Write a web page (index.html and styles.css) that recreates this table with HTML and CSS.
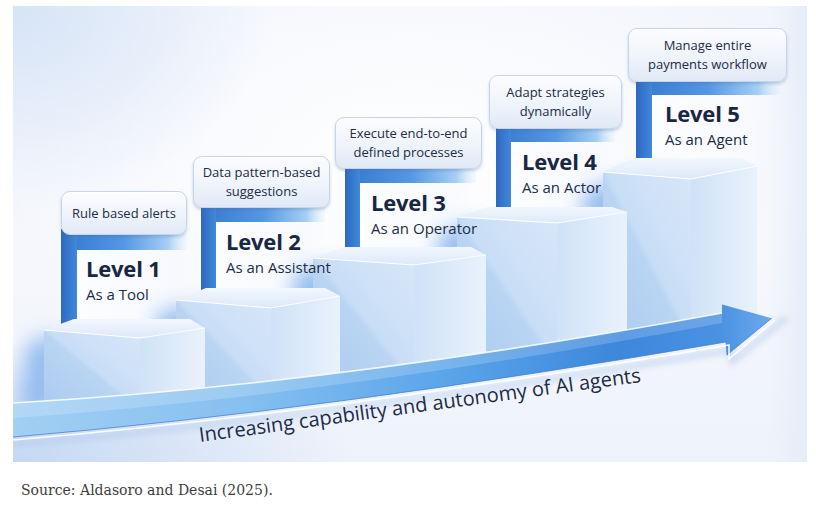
FILE: index.html
```html
<!DOCTYPE html>
<html lang="en">
<head>
<meta charset="utf-8">
<title>Levels of AI agents</title>
<link rel="stylesheet" href="styles.css">
</head>
<body>
<figure class="fig">
  <div class="canvas">
    <svg class="art" viewBox="13 6 794 456" width="794" height="456" aria-hidden="true">
      <defs>
        <linearGradient id="bar" x1="0" y1="0" x2="1" y2="0">
          <stop offset="0" stop-color="#2c69c0"/>
          <stop offset="1" stop-color="#4388da"/>
        </linearGradient>
        <linearGradient id="band" x1="0" y1="0" x2="1" y2="0">
          <stop offset="0" stop-color="#3378cf"/>
          <stop offset="0.5" stop-color="#5597e2"/>
          <stop offset="0.85" stop-color="#a6cff4"/>
          <stop offset="1" stop-color="#d6e9fb" stop-opacity="0.2"/>
        </linearGradient>
        <linearGradient id="panel" x1="0" y1="0" x2="1" y2="0">
          <stop offset="0" stop-color="#fcfdff"/>
          <stop offset="0.75" stop-color="#f8fafe"/>
          <stop offset="1" stop-color="#f4f7fd" stop-opacity="0"/>
        </linearGradient>
        <linearGradient id="front" x1="0" y1="1" x2="1" y2="0">
          <stop offset="0" stop-color="#a9caf0"/>
          <stop offset="0.48" stop-color="#bad5f3"/>
          <stop offset="0.52" stop-color="#c8def6"/>
          <stop offset="1" stop-color="#d8e7f9"/>
        </linearGradient>
        <linearGradient id="side" x1="0" y1="0" x2="1" y2="0">
          <stop offset="0" stop-color="#cfe2f7"/>
          <stop offset="1" stop-color="#e9f2fc"/>
        </linearGradient>
        <linearGradient id="top" x1="0" y1="0" x2="0" y2="1">
          <stop offset="0" stop-color="#f2f7fe"/>
          <stop offset="1" stop-color="#dce9f9"/>
        </linearGradient>
        <linearGradient id="shaft" gradientUnits="userSpaceOnUse" x1="13" y1="0" x2="772" y2="0">
          <stop offset="0" stop-color="#a2cff3"/>
          <stop offset="0.3" stop-color="#86c0f0"/>
          <stop offset="0.55" stop-color="#5ea7ea"/>
          <stop offset="0.8" stop-color="#3d87dc"/>
          <stop offset="0.93" stop-color="#4a91e2"/>
          <stop offset="1" stop-color="#6caaec"/>
        </linearGradient>
        <filter id="blur" x="-50%" y="-50%" width="200%" height="200%">
          <feGaussianBlur stdDeviation="10"/>
        </filter>
        <filter id="soft" x="-50%" y="-50%" width="200%" height="200%">
          <feGaussianBlur stdDeviation="3"/>
        </filter>
      </defs>

      <!-- brackets -->
      <g class="bracket">
        <rect x="61" y="229" width="126" height="21" fill="url(#band)"/>
        <rect x="77" y="250" width="110" height="80" fill="url(#panel)"/>
        <rect x="61" y="229" width="16" height="101" fill="url(#bar)"/>
      </g>
      <g class="bracket">
        <rect x="201" y="202" width="124" height="20" fill="url(#band)"/>
        <rect x="216" y="222" width="109" height="76" fill="url(#panel)"/>
        <rect x="201" y="202" width="15" height="96" fill="url(#bar)"/>
      </g>
      <g class="bracket">
        <rect x="345" y="163" width="131" height="20" fill="url(#band)"/>
        <rect x="360" y="183" width="116" height="76" fill="url(#panel)"/>
        <rect x="345" y="163" width="15" height="96" fill="url(#bar)"/>
      </g>
      <g class="bracket">
        <rect x="496" y="123" width="119" height="19" fill="url(#band)"/>
        <rect x="511" y="142" width="104" height="78" fill="url(#panel)"/>
        <rect x="496" y="123" width="15" height="97" fill="url(#bar)"/>
      </g>
      <g class="bracket">
        <rect x="636" y="76" width="144" height="19" fill="url(#band)"/>
        <rect x="652" y="95" width="128" height="76" fill="url(#panel)"/>
        <rect x="636" y="76" width="16" height="95" fill="url(#bar)"/>
      </g>

      <!-- glows behind boxes -->
      <g filter="url(#blur)" fill="#8db8ee" opacity="0.9">
        <polygon points="585,190 628,178 628,330 568,345"/>
        <polygon points="440,232 482,222 482,360 424,372"/>
        <polygon points="295,272 335,264 335,378 280,388"/>
        <polygon points="158,312 195,305 195,392 143,400"/>
        <polygon points="28,342 60,334 60,410 18,414"/>
      </g>

      <!-- boxes, back to front -->
      <g class="box">
        <polygon points="603,172 691,179 691,326 603,342" fill="url(#front)"/>
        <polygon points="691,179 757,166 757,322 691,326" fill="url(#side)"/>
        <polygon points="603,172 633,158 742,158 757,166 691,179" fill="url(#top)"/>
        <polyline points="603,172 691,179 757,166" fill="none" stroke="#ffffff" stroke-width="1.2" opacity="0.9"/>
      </g>
      <g class="box">
        <polygon points="457,217 557,223 557,349 457,365" fill="url(#front)"/>
        <polygon points="557,223 627,212 627,337 557,349" fill="url(#side)"/>
        <polygon points="457,217 487,207 612,207 627,212 557,223" fill="url(#top)"/>
        <polyline points="457,217 557,223 627,212" fill="none" stroke="#ffffff" stroke-width="1.2" opacity="0.9"/>
      </g>
      <g class="box">
        <polygon points="313,258 414,265 414,371 313,384" fill="url(#front)"/>
        <polygon points="414,265 486,255 486,360 414,371" fill="url(#side)"/>
        <polygon points="313,258 343,247 471,247 486,255 414,265" fill="url(#top)"/>
        <polyline points="313,258 414,265 486,255" fill="none" stroke="#ffffff" stroke-width="1.2" opacity="0.9"/>
      </g>
      <g class="box">
        <polygon points="176,300 271,308 271,389 176,399" fill="url(#front)"/>
        <polygon points="271,308 340,296 340,381 271,389" fill="url(#side)"/>
        <polygon points="176,300 206,288 325,288 340,296 271,308" fill="url(#top)"/>
        <polyline points="176,300 271,308 340,296" fill="none" stroke="#ffffff" stroke-width="1.2" opacity="0.9"/>
      </g>
      <g class="box">
        <polygon points="44,330 140,338 140,402 44,409" fill="url(#front)"/>
        <polygon points="140,338 205,328 205,396 140,402" fill="url(#side)"/>
        <polygon points="44,330 74,319 190,319 205,328 140,338" fill="url(#top)"/>
        <polyline points="44,330 140,338 205,328" fill="none" stroke="#ffffff" stroke-width="1.2" opacity="0.9"/>
      </g>

      <!-- arrow -->
      <path d="M13,444 Q330,418 730,350 L732,362 L786,318" fill="none" stroke="#a9c4ea" stroke-width="6" opacity="0.5" filter="url(#soft)"/>
      <path d="M13,403 Q330,385 722,313 L722,304 L772,318 L727,355 L726,342 Q330,410 13,437 Z" fill="url(#shaft)"/>
      <path d="M13,403 Q330,385 722,313 L722,323 Q330,396 13,418 Z" fill="#ffffff" opacity="0.18"/>
      <path d="M13,403 Q330,385 722,313" fill="none" stroke="#ffffff" stroke-width="1.6" opacity="0.85"/>
      <path d="M722,304 L772,318" fill="none" stroke="#ffffff" stroke-width="1" opacity="0.6"/>
      <path d="M13,437 Q330,410 726,342 L727,355 L772,318" fill="none" stroke="#3f7bc9" stroke-width="1" opacity="0.7"/>
      <path d="M13,440 Q330,413 729,345 L729,359 L775,320" fill="none" stroke="#ffffff" stroke-width="1.6" opacity="0.9"/>
    </svg>

    <div class="bubble b1">Rule based alerts</div>
    <div class="bubble b2">Data pattern-based<br>suggestions</div>
    <div class="bubble b3">Execute end-to-end<br>defined processes</div>
    <div class="bubble b4">Adapt strategies<br>dynamically</div>
    <div class="bubble b5">Manage entire<br>payments workflow</div>

    <div class="tag t1"><div class="title">Level 1</div><div class="sub">As a Tool</div></div>
    <div class="tag t2"><div class="title">Level 2</div><div class="sub">As an Assistant</div></div>
    <div class="tag t3"><div class="title">Level 3</div><div class="sub">As an Operator</div></div>
    <div class="tag t4"><div class="title">Level 4</div><div class="sub">As an Actor</div></div>
    <div class="tag t5"><div class="title">Level 5</div><div class="sub">As an Agent</div></div>

    <div class="axis-label">Increasing capability and autonomy of AI agents</div>
  </div>
  <figcaption class="source">Source: Aldasoro and Desai (2025).</figcaption>
</figure>
</body>
</html>
```

FILE: styles.css
```css
html, body {
  margin: 0;
  padding: 0;
  background: #ffffff;
}

.fig {
  margin: 6px 0 0 13px;
  padding: 0;
  width: 794px;
}

.canvas {
  position: relative;
  width: 794px;
  height: 456px;
  overflow: hidden;
  background:
    radial-gradient(ellipse 260px 200px at 0% 0%, #d6e4f7 0%, rgba(214, 228, 247, 0) 100%),
    radial-gradient(ellipse 340px 120px at 0% 100%, #c4d8f3 0%, rgba(196, 216, 243, 0) 100%),
    radial-gradient(ellipse 420px 260px at 50% 35%, #ffffff 0%, rgba(255, 255, 255, 0) 100%),
    linear-gradient(to left, #e6edf9 0px, rgba(230, 237, 249, 0) 40px),
    linear-gradient(180deg, #f2f5fc 0%, #f5f7fc 60%, #eef2fb 100%);
}

.art {
  position: absolute;
  left: 0;
  top: 0;
  display: block;
}

.bubble {
  position: absolute;
  box-sizing: border-box;
  display: flex;
  align-items: center;
  justify-content: center;
  text-align: center;
  font-family: "Open Sans", "Noto Sans", sans-serif;
  font-size: 13px;
  line-height: 19px;
  color: #222c45;
  background: linear-gradient(180deg, #fbfcff 0%, #eff4fb 55%, #e0e9f6 100%);
  border: 1px solid #c6d5eb;
  border-radius: 9px;
  box-shadow: 0 2px 3px rgba(70, 110, 170, 0.28), inset 0 1px 0 #ffffff;
}

.b1 { left: 48px;  top: 185px; width: 126px; height: 44px; }
.b2 { left: 180px; top: 150px; width: 137px; height: 52px; }
.b3 { left: 322px; top: 111px; width: 147px; height: 52px; }
.b4 { left: 476px; top: 69px;  width: 133px; height: 54px; }
.b5 { left: 615px; top: 22px;  width: 159px; height: 54px; }

.tag {
  position: absolute;
  font-family: "Open Sans", "Noto Sans", sans-serif;
  white-space: nowrap;
}

.tag .title {
  font-size: 22px;
  line-height: 24px;
  font-weight: 700;
  color: #1a2742;
  letter-spacing: -0.2px;
}

.tag .sub {
  margin-top: 2px;
  font-size: 15px;
  line-height: 24px;
  color: #222c45;
}

.t1 { left: 73px;  top: 250px; }
.t2 { left: 213px; top: 223px; }
.t3 { left: 358px; top: 184px; }
.t4 { left: 509px; top: 143px; }
.t5 { left: 652px; top: 95px; }

.axis-label {
  position: absolute;
  left: 187px;
  top: 419px;
  font-family: "Open Sans", "Noto Sans", sans-serif;
  font-size: 20px;
  line-height: 20px;
  color: #1e2b48;
  white-space: nowrap;
  transform-origin: 0 17.8px;
  transform: rotate(-7.75deg);
}

.source {
  margin: 18px 0 0 8px;
  font-family: "DejaVu Serif", "Liberation Serif", serif;
  font-size: 14px;
  line-height: 20px;
  color: #3d3d3d;
}
```
